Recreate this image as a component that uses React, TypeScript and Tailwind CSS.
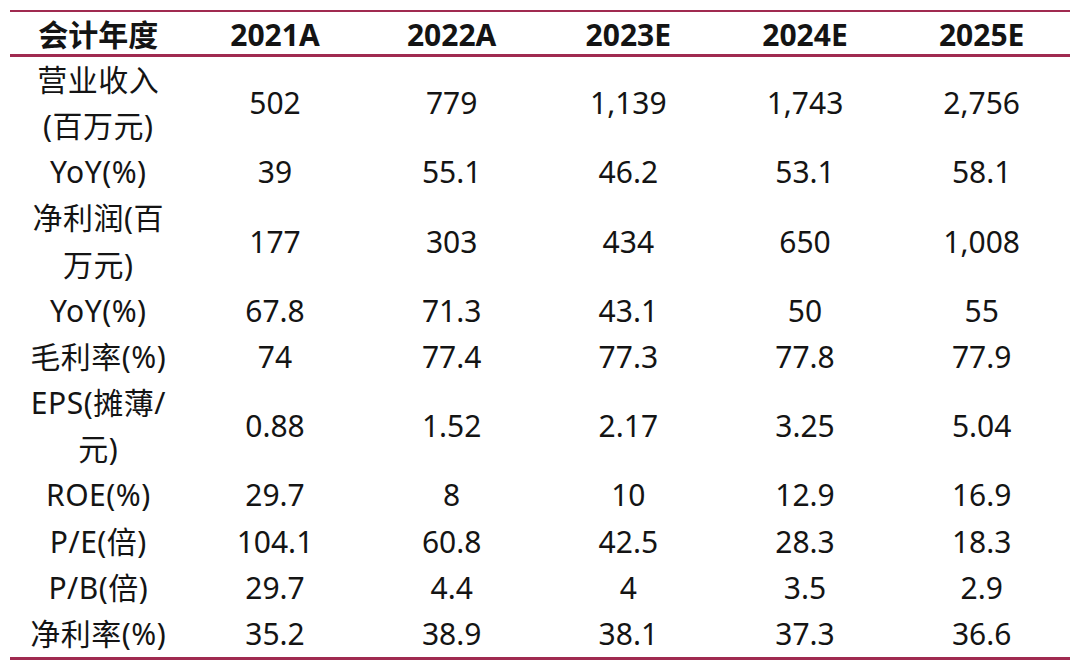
import { FC, ReactNode } from "react";

interface IRow {
  label: ReactNode;
  values: string[];
}

const headers = ["2021A", "2022A", "2023E", "2024E", "2025E"];

const rows: IRow[] = [
  {
    label: (
      <>
        营业收入
        <br />
        (百万元)
      </>
    ),
    values: ["502", "779", "1,139", "1,743", "2,756"],
  },
  { label: "YoY(%)", values: ["39", "55.1", "46.2", "53.1", "58.1"] },
  {
    label: (
      <>
        净利润(百
        <br />
        万元)
      </>
    ),
    values: ["177", "303", "434", "650", "1,008"],
  },
  { label: "YoY(%)", values: ["67.8", "71.3", "43.1", "50", "55"] },
  { label: "毛利率(%)", values: ["74", "77.4", "77.3", "77.8", "77.9"] },
  {
    label: (
      <>
        EPS(摊薄/
        <br />
        元)
      </>
    ),
    values: ["0.88", "1.52", "2.17", "3.25", "5.04"],
  },
  { label: "ROE(%)", values: ["29.7", "8", "10", "12.9", "16.9"] },
  { label: "P/E(倍)", values: ["104.1", "60.8", "42.5", "28.3", "18.3"] },
  { label: "P/B(倍)", values: ["29.7", "4.4", "4", "3.5", "2.9"] },
  { label: "净利率(%)", values: ["35.2", "38.9", "38.1", "37.3", "36.6"] },
];

const Row: FC<IRow> = ({ label, values }) => {
  return (
    <div className="grid grid-cols-6 items-center leading-[46.15px]">
      <div className="text-center tracking-[0.5px]">{label}</div>
      {values.map((v, i) => (
        <div key={i} className="text-center">
          {v}
        </div>
      ))}
    </div>
  );
};

export default function App() {
  return (
    <div
      className="w-[1080px] h-[670px] bg-white pt-[10px] px-[10px] text-[30px] text-[#141414]"
      style={{ fontFamily: '"Noto Sans", "Noto Sans CJK SC", sans-serif' }}
    >
      <div className="border-t-2 border-b-[3px] border-[#a02a50]">
        {/* Header */}
        <div className="grid grid-cols-6 items-center h-[45px] border-b-[3px] border-[#a02a50] font-bold">
          <div className="text-center">会计年度</div>
          {headers.map((h) => (
            <div key={h} className="text-center">
              {h}
            </div>
          ))}
        </div>
        {rows.map((r, i) => (
          <Row key={i} {...r} />
        ))}
      </div>
    </div>
  );
}
